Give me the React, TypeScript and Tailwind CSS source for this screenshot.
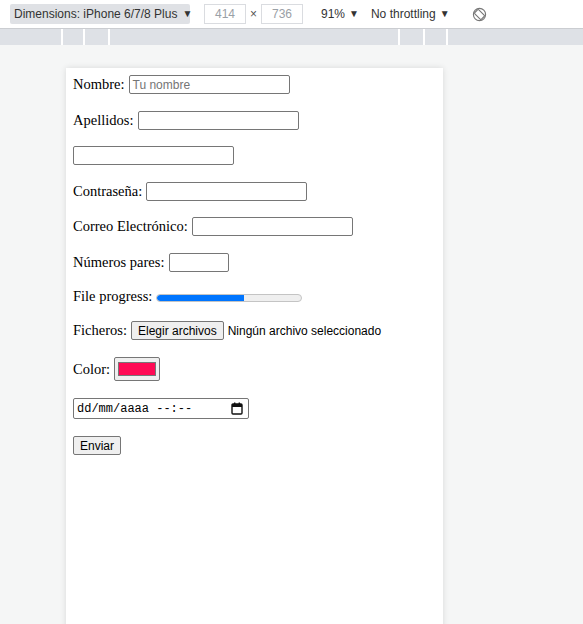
import * as React from "react";

const serif = "font-['Liberation_Serif','Times_New_Roman',serif] text-[14.5px] leading-none text-black whitespace-nowrap";
const sans = "font-['Liberation_Sans',Arial,sans-serif]";
const ui = "font-['Liberation_Sans',Arial,sans-serif]";

function TextBox({ w = 161, placeholder }: { w?: number; placeholder?: string }) {
  return (
    <div
      className={`h-[19px] rounded-[2px] border border-[#767676] bg-white px-[3px] flex items-center ${sans} text-[12px] leading-none text-[#757575]`}
      style={{ width: w }}
    >
      {placeholder}
    </div>
  );
}

function Row({ mt, h = 19, children }: { mt: number; h?: number; children: React.ReactNode }) {
  return (
    <div className="flex items-center" style={{ marginTop: mt, height: h }}>
      {children}
    </div>
  );
}

export default function App() {
  return (
    <div className="relative w-[583px] h-[624px] overflow-hidden bg-[#f5f6f6]">
      {/* Device toolbar */}
      <div className={`h-[29px] bg-white border-b border-[#cbcdd1] flex items-center whitespace-nowrap ${ui} text-[12px] leading-none text-[#333]`}>
        <div className="ml-[10px] h-[20px] w-[180px] bg-[#dfe1e5] rounded-[2px] flex items-center pl-[4px] gap-[5px]">
          <span>Dimensions: iPhone 6/7/8 Plus</span>
          <span className="text-[10px]">▼</span>
        </div>
        <div className="ml-[14px] h-[20px] w-[42px] border border-[#dadce0] flex items-center px-[10px] text-[#9aa0a6]">414</div>
        <span className="mx-[4px] text-[12px] text-[#555]">×</span>
        <div className="h-[20px] w-[42px] border border-[#dadce0] flex items-center px-[10px] text-[#9aa0a6]">736</div>
        <span className="ml-[18px]">91%</span>
        <span className="ml-[4px] text-[10px]">▼</span>
        <span className="ml-[12px]">No throttling</span>
        <span className="ml-[4px] text-[10px]">▼</span>
        <svg className="ml-[22px]" width="15" height="15" viewBox="0 0 16 16" fill="none" stroke="#777" strokeWidth="1.2">
          <circle cx="8" cy="8" r="6.5" />
          <rect x="5" y="3" width="6" height="10" rx="1" transform="rotate(-45 8 8)" />
        </svg>
      </div>

      {/* Ruler */}
      <div className="h-[16px] bg-[#dee1e6] flex">
        <div className="ml-[61px] w-[2px] bg-white" />
        <div className="ml-[20px] w-[2px] bg-white" />
        <div className="ml-[23px] w-[2px] bg-white" />
        <div className="ml-[288px] w-[2px] bg-white" />
        <div className="ml-[23px] w-[2px] bg-white" />
        <div className="ml-[21px] w-[2px] bg-white" />
      </div>

      {/* Page */}
      <div className="ml-[66px] mt-[23px] w-[377px] h-[600px] bg-white shadow-[0_0_6px_rgba(0,0,0,0.12)] pl-[7px] pt-[7px]">
        <Row mt={0}>
          <span className={serif}>Nombre:</span>
          <div className="ml-[4px]"><TextBox placeholder="Tu nombre" /></div>
        </Row>
        <Row mt={17}>
          <span className={serif}>Apellidos:</span>
          <div className="ml-[5px]"><TextBox /></div>
        </Row>
        <Row mt={16}>
          <TextBox />
        </Row>
        <Row mt={17}>
          <span className={serif}>Contraseña:</span>
          <div className="ml-[4px]"><TextBox /></div>
        </Row>
        <Row mt={16}>
          <span className={serif}>Correo Electrónico:</span>
          <div className="ml-[4px]"><TextBox /></div>
        </Row>
        <Row mt={17}>
          <span className={serif}>Números pares:</span>
          <div className="ml-[5px]"><TextBox w={60} /></div>
        </Row>
        <Row mt={15}>
          <span className={serif}>File progress:</span>
          <div className="ml-[4px] mt-[2px] h-[8px] w-[146px] rounded-full bg-[#efefef] border border-[#c4c4c4] overflow-hidden">
            <div className="h-full w-[60%] bg-[#0075ff] rounded-l-full" />
          </div>
        </Row>
        <Row mt={15}>
          <span className={serif}>Ficheros:</span>
          <div className={`ml-[4px] h-[19px] px-[6px] flex items-center rounded-[2px] border border-[#767676] bg-[#efefef] ${sans} text-[12px] leading-none text-black whitespace-nowrap`}>
            Elegir archivos
          </div>
          <span className={`ml-[4px] ${sans} text-[12px] leading-none text-black whitespace-nowrap`}>Ningún archivo seleccionado</span>
        </Row>
        <Row mt={17} h={24}>
          <span className={serif}>Color:</span>
          <div className="ml-[4px] h-[24px] w-[46px] rounded-[2px] border border-[#767676] bg-[#efefef] flex items-center justify-center">
            <div className="h-[14px] w-[38px] bg-[#ff0a54] border border-[#777]" />
          </div>
        </Row>
        <Row mt={17} h={21}>
          <div className="h-[21px] w-[176px] rounded-[2px] border border-[#767676] bg-white flex items-center pl-[3px] pr-[5px]">
            <span className="font-['Liberation_Mono','DejaVu_Sans_Mono',monospace] text-[12px] leading-none text-black whitespace-nowrap">
              dd/mm/aaaa --:--
            </span>
            <svg className="ml-auto" width="12" height="13" viewBox="0 0 12 13" fill="none">
              <rect x="1" y="2" width="10" height="10" rx="1" stroke="#111" strokeWidth="1.4" />
              <rect x="1" y="2" width="10" height="3" fill="#111" />
              <rect x="3" y="0.5" width="1.4" height="2.5" fill="#111" />
              <rect x="7.6" y="0.5" width="1.4" height="2.5" fill="#111" />
            </svg>
          </div>
        </Row>
        <Row mt={17}>
          <div className={`h-[19px] px-[6px] flex items-center rounded-[2px] border border-[#767676] bg-[#efefef] ${sans} text-[12px] leading-none text-black`}>
            Enviar
          </div>
        </Row>
      </div>
    </div>
  );
}
